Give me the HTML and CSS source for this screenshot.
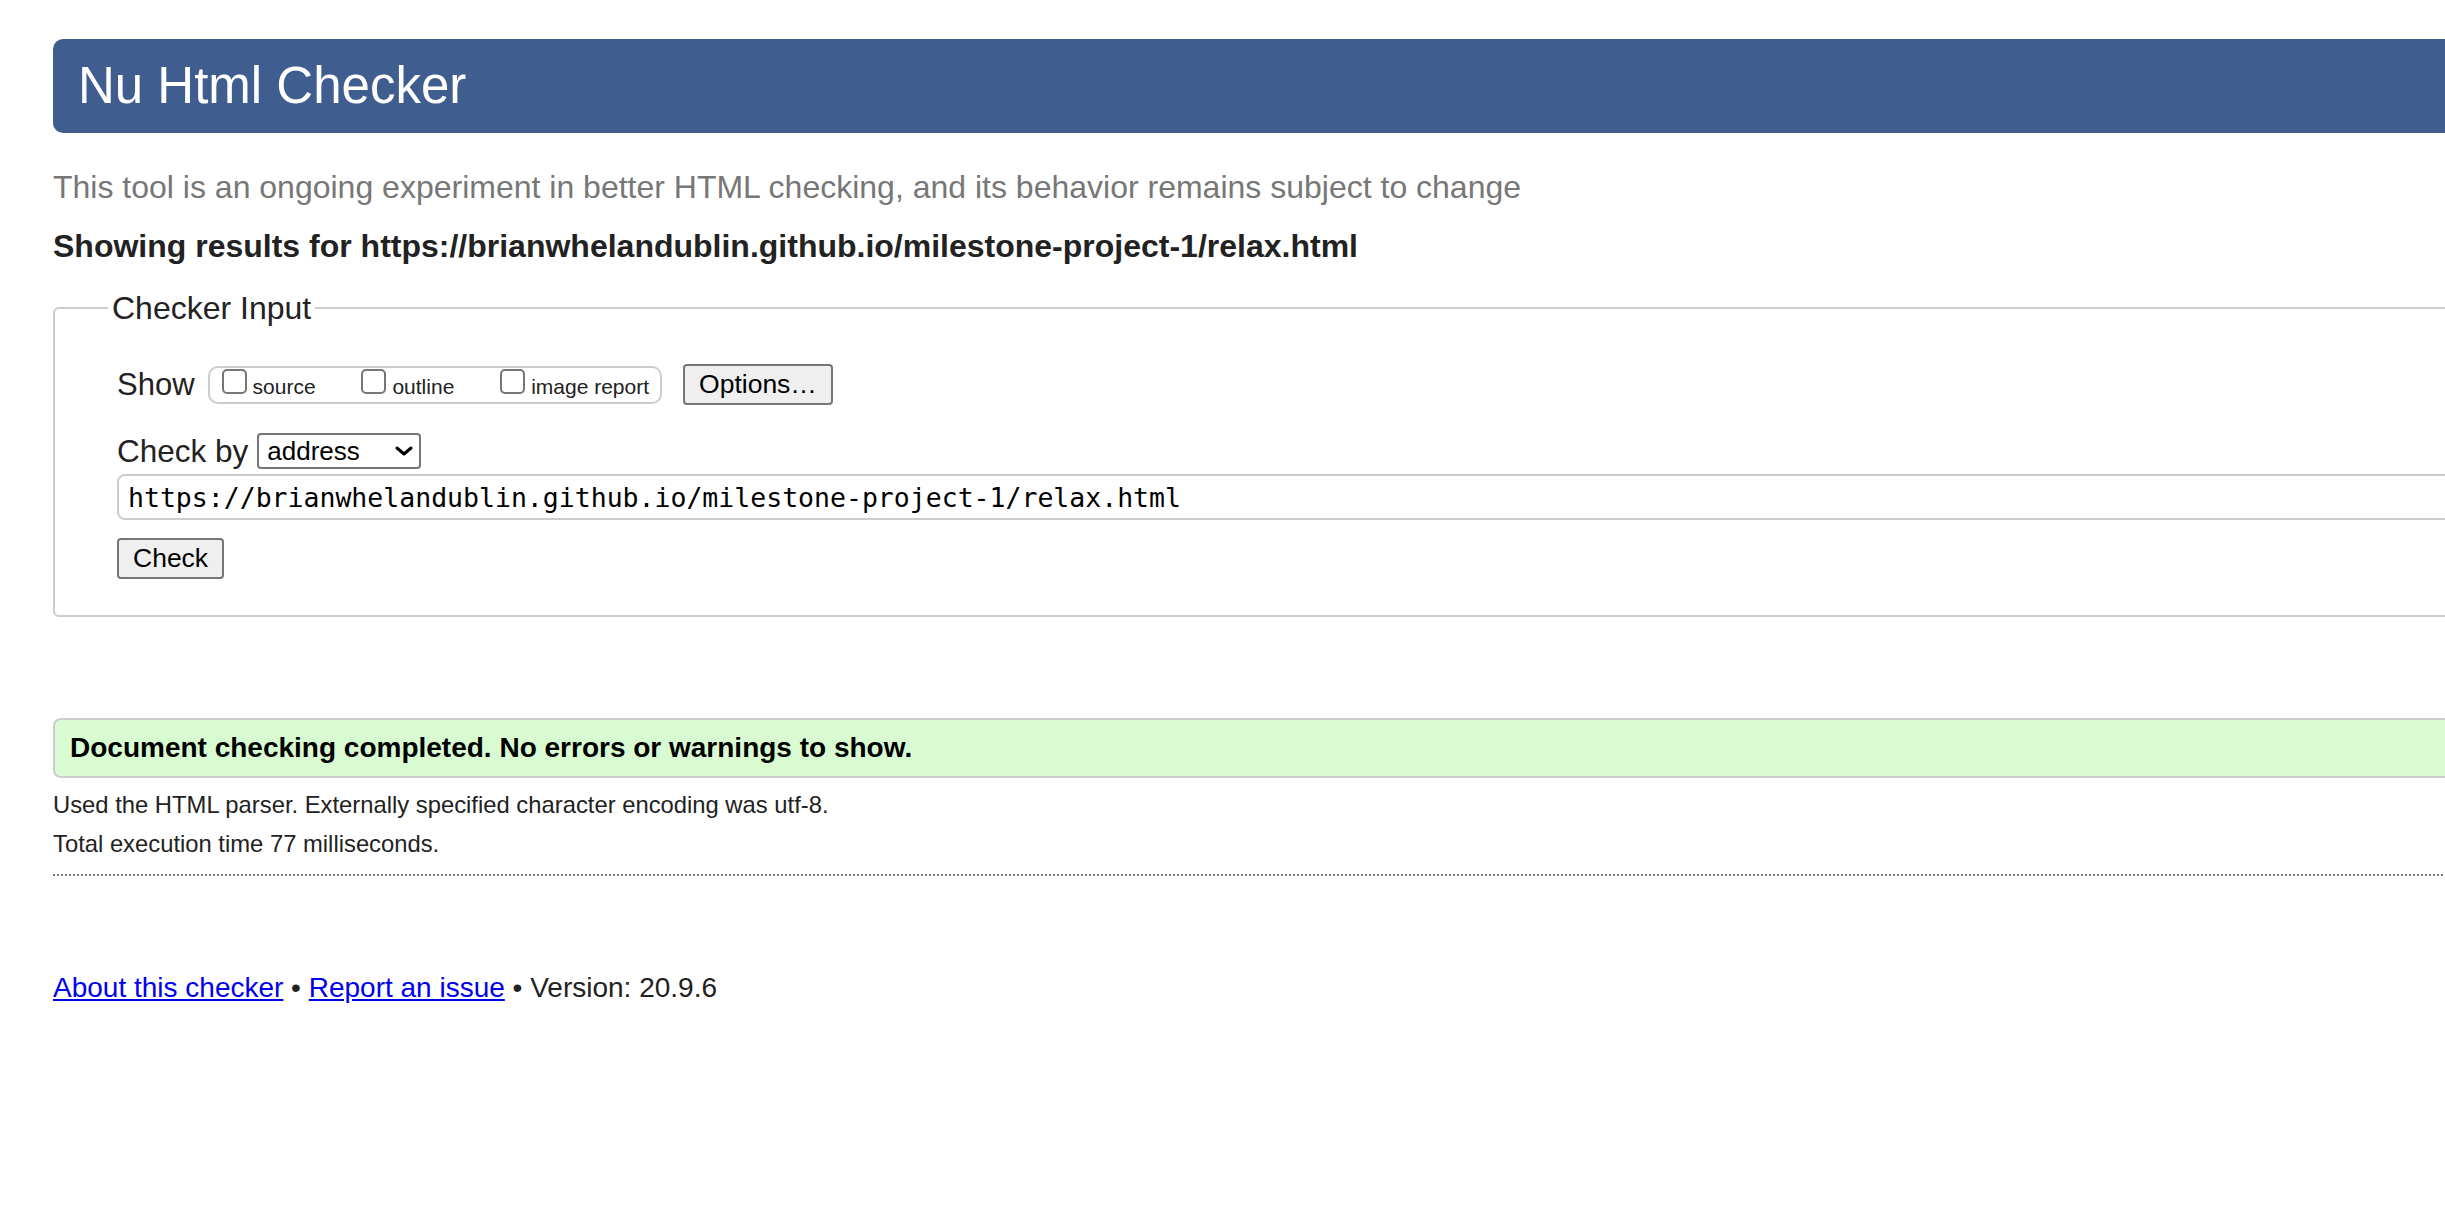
FILE: index.html
```html
<!DOCTYPE html>
<html lang="en">
<head>
<meta charset="utf-8">
<title>Showing results for https://brianwhelandublin.github.io/milestone-project-1/relax.html - Nu Html Checker</title>
<link rel="stylesheet" href="styles.css">
</head>
<body>
<div class="page">
  <h1 class="banner">Nu Html Checker</h1>
  <p class="about">This tool is an ongoing experiment in better HTML checking, and its behavior remains subject to change</p>
  <h2 class="target">Showing results for https://brianwhelandublin.github.io/milestone-project-1/relax.html</h2>
  <form class="checker">
    <fieldset class="input-set">
      <legend class="input-legend">Checker Input</legend>
      <div class="show-row">
        <span class="row-label">Show</span>
        <div class="show-group">
          <label class="opt"><input type="checkbox" class="cb">source</label>
          <label class="opt"><input type="checkbox" class="cb">outline</label>
          <label class="opt"><input type="checkbox" class="cb">image report</label>
        </div>
        <button type="button" class="btn btn-options">Options…</button>
      </div>
      <div class="by-row">
        <span class="row-label">Check by</span>
        <div class="select-wrap">
          <select class="by-select"><option>address</option></select>
          <svg class="chev" width="18" height="10" viewBox="0 0 18 10" aria-hidden="true"><path d="M2 2 L9 8 L16 2" fill="none" stroke="#000" stroke-width="3" stroke-linecap="round" stroke-linejoin="round"/></svg>
        </div>
      </div>
      <input class="url" type="url" value="https://brianwhelandublin.github.io/milestone-project-1/relax.html">
      <button type="button" class="btn btn-check">Check</button>
    </fieldset>
  </form>
  <div class="status">Document checking completed. No errors or warnings to show.</div>
  <div class="details">
    <p class="meta">Used the HTML parser. Externally specified character encoding was utf-8.</p>
    <p class="meta">Total execution time 77 milliseconds.</p>
  </div>
  <p class="footer"><a href="#" class="flink">About this checker</a> • <a href="#" class="flink">Report an issue</a> • Version: 20.9.6</p>
</div>
</body>
</html>
```

FILE: styles.css
```css
html {
  overflow: hidden;
}

body {
  margin: 0;
  font-family: "Liberation Sans", Arial, Helvetica, sans-serif;
  color: #222;
  background: #fff;
}

.page {
  width: 2750px;
  padding: 39px 0 0 53px;
}

.banner {
  margin: 0;
  height: 94px;
  box-sizing: border-box;
  padding-left: 25px;
  font-size: 51px;
  font-weight: normal;
  line-height: 94px;
  color: #fff;
  background: #3f5e8f;
  border-radius: 10px;
}

.about {
  margin: 36px 0 0;
  font-size: 32px;
  line-height: 37px;
  color: #777;
}

.target {
  margin: 22px 0 0;
  font-size: 32px;
  line-height: 37px;
  font-weight: bold;
  color: #222;
}

.checker {
  margin: 0;
}

.input-set {
  margin: 24px 0 0;
  padding: 37px 0 36px 62px;
  border: 2px solid #ccc;
  border-radius: 6px;
  min-width: 0;
}

.input-legend {
  margin-left: -9px;
  padding: 0 4px;
  font-size: 32px;
  line-height: 38px;
  color: #222;
}

.show-row {
  display: flex;
  align-items: center;
  height: 41px;
}

.row-label {
  font-size: 31px;
  line-height: 36px;
  color: #222;
}

.by-row .row-label {
  font-size: 31.5px;
}

.show-group {
  margin-left: 13px;
  padding: 1px 11px 5px 12px;
  border: 2px solid #ccc;
  border-radius: 10px;
  font-size: 21px;
  line-height: 1;
  white-space: nowrap;
}

.opt {
  color: #222;
}

.opt + .opt {
  margin-left: 40px;
}

.cb {
  appearance: none;
  -webkit-appearance: none;
  width: 25px;
  height: 25px;
  margin: 0 6px 0 0;
  box-sizing: border-box;
  border: 2px solid #767676;
  border-radius: 5px;
  background: #fff;
  vertical-align: baseline;
}

.btn {
  box-sizing: border-box;
  height: 41px;
  padding: 0 14px;
  font-family: "Liberation Sans", Arial, Helvetica, sans-serif;
  font-size: 26.5px;
  color: #000;
  background: #efefef;
  border: 2px solid #767676;
  border-radius: 4px;
}

.btn-options {
  margin-left: 21px;
}

.by-row {
  display: flex;
  align-items: center;
  margin-top: 28px;
  height: 36px;
}

.select-wrap {
  position: relative;
  margin-left: 9px;
  height: 36px;
}

.by-select {
  appearance: none;
  -webkit-appearance: none;
  box-sizing: border-box;
  width: 164px;
  height: 36px;
  padding: 0 0 0 8px;
  font-family: "Liberation Sans", Arial, Helvetica, sans-serif;
  font-size: 26px;
  color: #000;
  background: #fff;
  border: 2px solid #767676;
  border-radius: 4px;
}

.chev {
  position: absolute;
  left: 138px;
  top: 13px;
  pointer-events: none;
}

.url {
  display: block;
  box-sizing: border-box;
  width: 100%;
  height: 46px;
  margin: 5px 0 0;
  padding: 0 0 0 9px;
  font-family: "DejaVu Sans Mono", "Liberation Mono", monospace;
  font-size: 26.5px;
  color: #000;
  background: #fff;
  border: 2px solid #ccc;
  border-radius: 8px;
}

.btn-check {
  display: block;
  margin-top: 18px;
}

.status {
  margin-top: 101px;
  height: 60px;
  box-sizing: border-box;
  padding-left: 15px;
  font-size: 28px;
  font-weight: bold;
  line-height: 56px;
  color: #000;
  background: #d8fbd1;
  border: 2px solid #ccc;
  border-radius: 8px;
}

.details {
  padding: 14px 0 17px;
  border-bottom: 2px dotted #777;
}

.meta {
  margin: 0;
  font-size: 23.8px;
  line-height: 26px;
  color: #222;
}

.meta + .meta {
  margin-top: 13px;
}

.footer {
  margin: 95px 0 0;
  font-size: 28px;
  line-height: 34px;
  color: #222;
}

.flink {
  color: #0000ee;
  text-decoration: underline;
}
```
